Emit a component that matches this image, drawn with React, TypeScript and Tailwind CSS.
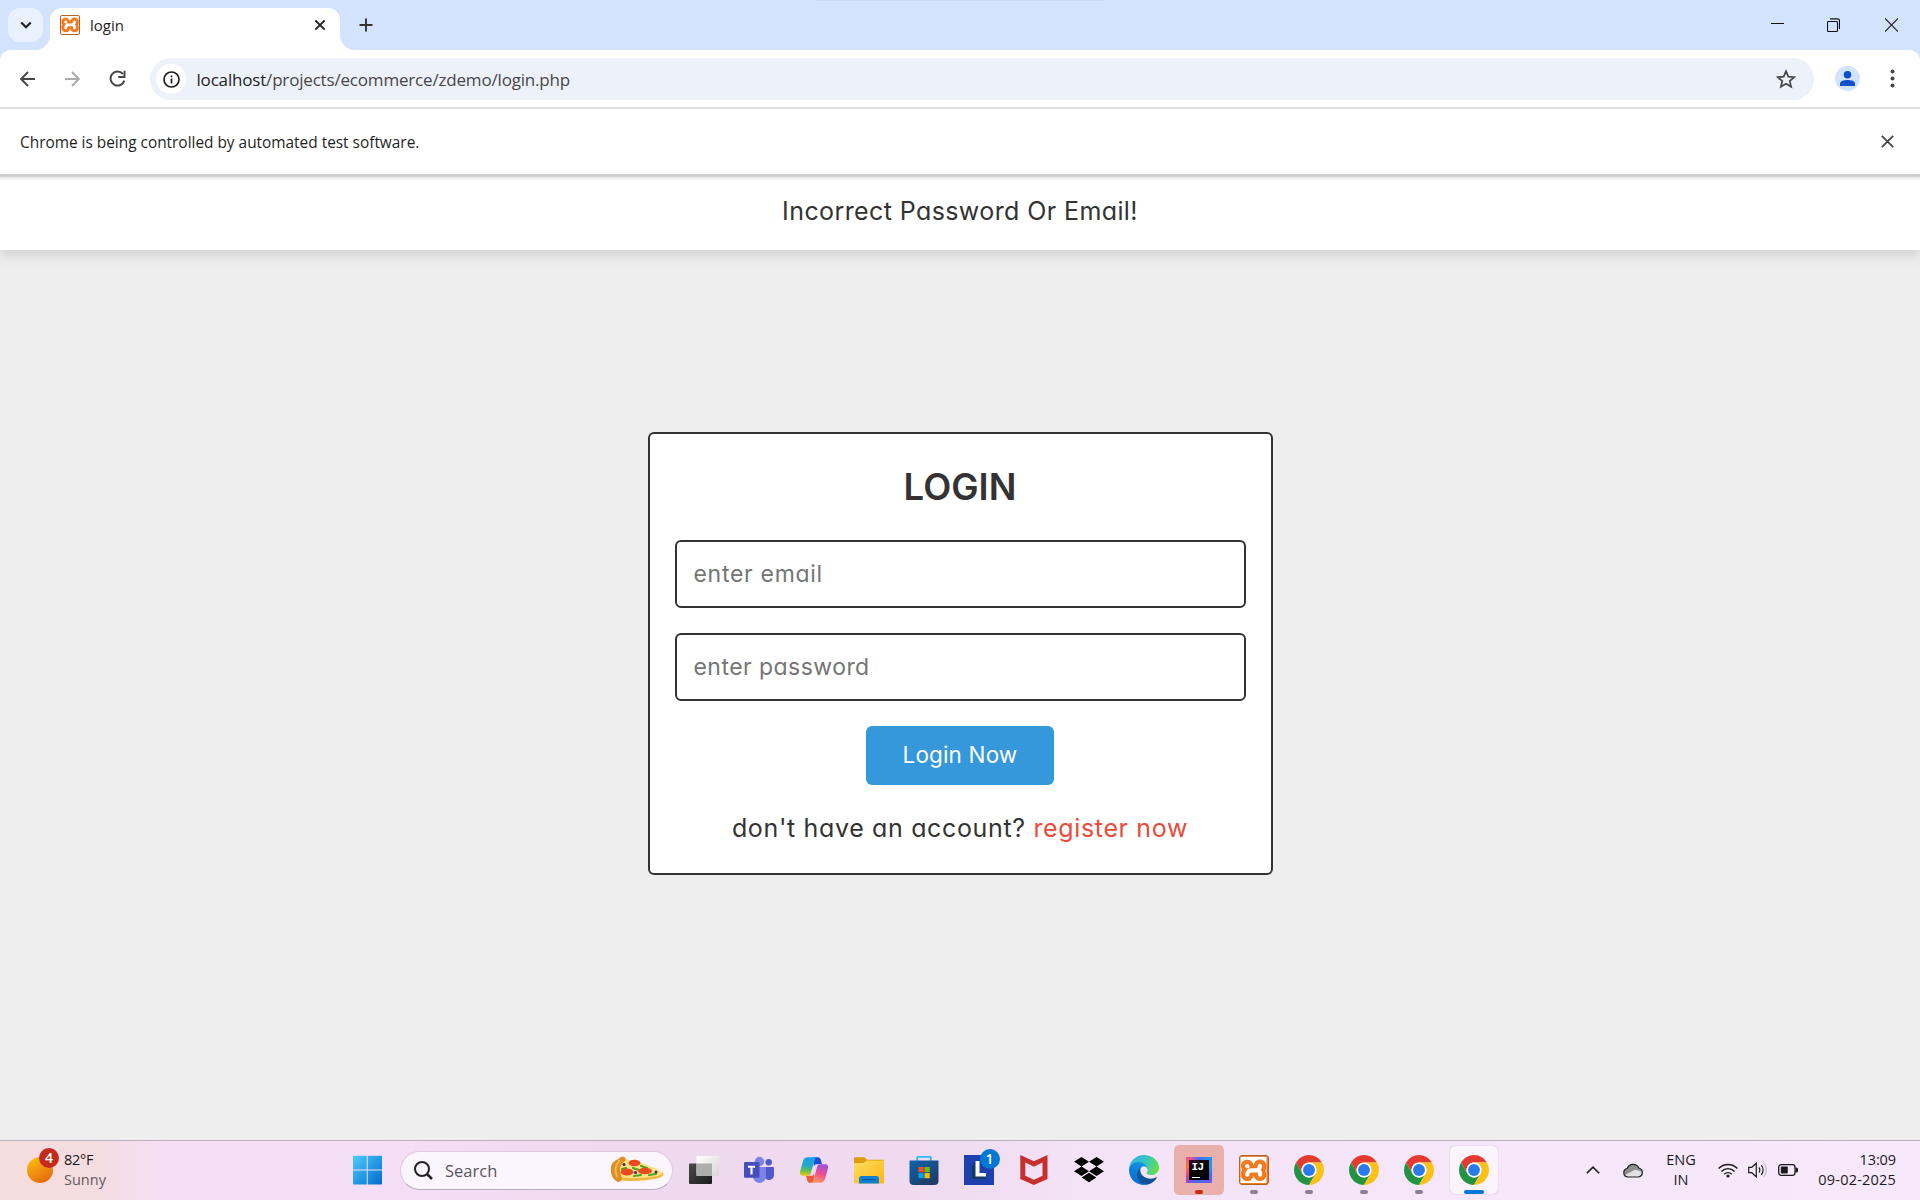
import React from "react";
import { SiXampp } from "react-icons/si";

const UI = "font-['Open_Sans','Noto_Sans',sans-serif]";
const PAGE = "font-['Inter',sans-serif] [font-feature-settings:'cv11']";

function XamppIcon({ small = false }: { small?: boolean }) {
  return (
    <span
      className={`flex shrink-0 items-center justify-center overflow-hidden border border-[#b9621f] bg-[linear-gradient(180deg,#e58a4a_0%,#f27a20_18%,#f4781c_100%)] ${
        small ? "h-5 w-5 rounded-[2px]" : "h-[30px] w-[30px] rounded-[3px]"
      }`}
    >
      <SiXampp size={small ? 24 : 35} className="block shrink-0 text-white [clip-path:inset(13%)]" />
    </span>
  );
}

function ChromeIcon() {
  return (
    <svg width="30" height="30" viewBox="0 0 48 48">
      <path fill="#e33b2e" d="M24 12H44.78A24 24 0 0 0 3.218 12.006L13.609 30.003A12 12 0 0 1 24 12Z" />
      <path fill="#229342" d="M13.609 30.003 3.218 12.006A24 24 0 0 0 24 48L34.393 30.003A12 12 0 0 1 13.609 30.003Z" />
      <path fill="#fbc116" d="M34.391 30.003 24 48A24 24 0 0 0 44.78 12H24A12 12 0 0 1 34.391 30.003Z" />
      <circle cx="24" cy="24" r="12" fill="#fff" />
      <circle cx="24" cy="24" r="9.5" fill="#2a7bea" />
    </svg>
  );
}

function EdgeIcon() {
  return (
    <svg width="30" height="30" viewBox="0 0 256 256">
      <defs>
        <linearGradient id="edgeA" x1="0" y1="0" x2="1" y2="0">
          <stop offset="0" stopColor="#0c59a4" />
          <stop offset="1" stopColor="#114a8b" />
        </linearGradient>
        <linearGradient id="edgeB" x1="0.8" y1="0" x2="0.3" y2="1">
          <stop offset="0" stopColor="#1b9de2" />
          <stop offset="0.5" stopColor="#0c80d8" />
          <stop offset="1" stopColor="#0a6fd0" />
        </linearGradient>
        <linearGradient id="edgeC" x1="0" y1="0.3" x2="1" y2="0.6">
          <stop offset="0" stopColor="#2fb4ea" />
          <stop offset="0.5" stopColor="#36c5c0" />
          <stop offset="1" stopColor="#66de4a" />
        </linearGradient>
      </defs>
      <path fill="url(#edgeA)" d="M231 190.5c-3.4 1.8-6.9 3.4-10.5 4.7a101.5 101.5 0 0 1-35.9 6.5c-47.3 0-88.5-32.5-88.5-74.3 0-11.5 6.4-21.9 16.4-27.3-42.8 1.8-53.8 46.4-53.8 72.5 0 73.9 68.1 81.4 82.8 81.4 7.9 0 19.8-2.3 27-4.6l1.3-.4a128.3 128.3 0 0 0 66.6-52.8 4 4 0 0 0-5.4-5.7Z" />
      <path fill="url(#edgeB)" d="M105.7 241.4a79.2 79.2 0 0 1-22.7-21.3 80.7 80.7 0 0 1 29.5-120c3.2-1.5 8.5-4.1 15.6-4a32.4 32.4 0 0 1 25.7 13 31.9 31.9 0 0 1 6.3 18.7c0-.2 24.5-79.6-80-79.6-43.9 0-80 41.6-80 78.2a130.2 130.2 0 0 0 12.1 56 128 128 0 0 0 156.4 67 75.6 75.6 0 0 1-62.8-8Z" />
      <path fill="url(#edgeC)" d="M152.3 148.9c-.9 1-3.4 2.5-3.4 5.6 0 2.6 1.7 5.1 4.7 7.3 14.5 10 41.7 8.7 41.8 8.7a60.5 60.5 0 0 0 30.5-8.4 61.8 61.8 0 0 0 30.5-53.2c.3-22.4-8-37.3-11.3-43.9C224 23.8 177.7 0 128 0A128 128 0 0 0 0 126.2c.5-36.5 36.8-66 80-66 3.5 0 23.5.3 42 10a72.6 72.6 0 0 1 30.9 29.3c6.1 10.6 7.2 24.1 7.2 29.5s-2.7 13.3-7.8 19.9Z" />
    </svg>
  );
}

function TaskViewIcon() {
  return (
    <svg width="30" height="30" viewBox="0 0 30 30">
      <defs>
        <linearGradient id="tvA" x1="0" y1="0" x2="1" y2="1">
          <stop offset="0" stopColor="#4a4a4a" />
          <stop offset="1" stopColor="#1c1c1c" />
        </linearGradient>
        <linearGradient id="tvB" x1="0" y1="0" x2="1" y2="1">
          <stop offset="0" stopColor="#ffffff" />
          <stop offset="1" stopColor="#d6d6d6" />
        </linearGradient>
      </defs>
      <rect x="0" y="8.5" width="23" height="20.5" rx="1" fill="url(#tvA)" />
      <rect x="7.5" y="1" width="22.5" height="20" rx="1" fill="url(#tvB)" />
      <rect x="7.5" y="8.5" width="15.5" height="12.5" fill="#adadad" />
    </svg>
  );
}

function TeamsIcon() {
  return (
    <svg width="30" height="30" viewBox="0 0 30 30">
      <circle cx="15.5" cy="6.5" r="4.7" fill="#7b83eb" />
      <circle cx="24.7" cy="7.2" r="3.2" fill="#5059c9" />
      <path d="M21 12h8a1 1 0 0 1 1 1v7a5 5 0 0 1-9 3Z" fill="#5059c9" />
      <path d="M9 12h13v9.500a6.500 6.500 0 0 1-13 0Z" fill="#7b83eb" />
      <rect x="0" y="7" width="15.5" height="15.7" rx="1" fill="#464eb8" />
      <path d="M4 10.800h7v2H8.600v6.800H6.400v-6.800H4Z" fill="#fff" />
    </svg>
  );
}

function CopilotIcon() {
  return (
    <svg width="30" height="30" viewBox="0 0 30 30">
      <defs>
        <linearGradient id="cpA" x1="0.4" y1="0" x2="0.3" y2="1">
          <stop offset="0" stopColor="#1c9df0" />
          <stop offset="0.45" stopColor="#20a8c8" />
          <stop offset="0.75" stopColor="#6cc04a" />
          <stop offset="1" stopColor="#f2c811" />
        </linearGradient>
        <linearGradient id="cpB" x1="0.7" y1="0" x2="0.3" y2="1">
          <stop offset="0" stopColor="#9b52e8" />
          <stop offset="0.5" stopColor="#ee4f8c" />
          <stop offset="1" stopColor="#fda063" />
        </linearGradient>
      </defs>
      <path d="M14 2.200h4.800c1.700 0 2.500 1 3 2.600l1.200 4.400h-5.300c-1.500 0-2.300.8-2.700 2.300Z" fill="#1c4fd0" />
      <path d="M16 27.800h-4.800c-1.700 0-2.500-1-3-2.600L7 20.800h5.300c1.500 0 2.300-.8 2.700-2.300Z" fill="#ee5a34" />
      <path d="M8.500 2.200h10c-1.700.3-2.500 1.500-3 3.200l-3.600 12.700c-.5 1.800-1.400 2.700-3.200 2.700H4.200c-2.800 0-3.900-1.500-3-4.700L4 6.200c.8-2.800 2.100-4 4.500-4Z" fill="url(#cpA)" />
      <path d="M21.500 27.800h-10c1.700-.3 2.500-1.500 3-3.200l3.600-12.700c.5-1.800 1.400-2.700 3.200-2.700h4.500c2.800 0 3.900 1.500 3 4.700L26 23.800c-.8 2.800-2.100 4-4.500 4Z" fill="url(#cpB)" />
    </svg>
  );
}

function FolderIcon() {
  return (
    <svg width="30" height="30" viewBox="0 0 30 30">
      <defs>
        <linearGradient id="fdA" x1="0" y1="0" x2="1" y2="1">
          <stop offset="0" stopColor="#ffdc62" />
          <stop offset="1" stopColor="#fcb614" />
        </linearGradient>
      </defs>
      <path d="M0 3.200a1 1 0 0 1 1-1h9.500L13 4.800h16a1 1 0 0 1 1 1V12H0Z" fill="#dd9c0b" />
      <path d="M0 8h9.500L13 5.500h17v22a1 1 0 0 1-1 1H1a1 1 0 0 1-1-1Z" fill="url(#fdA)" />
      <path d="M5 28.500v-5a2.500 2.500 0 0 1 2.500-2.500h15a2.500 2.500 0 0 1 2.500 2.500v5Z" fill="#1180d2" />
      <rect x="8" y="24" width="14" height="1.3" rx=".6" fill="#0a559c" />
    </svg>
  );
}

function StoreIcon() {
  return (
    <svg width="30" height="30" viewBox="0 0 30 30">
      <defs>
        <linearGradient id="stA" x1="0" y1="0" x2="0.7" y2="1">
          <stop offset="0" stopColor="#0f63b0" />
          <stop offset="1" stopColor="#1d3c66" />
        </linearGradient>
      </defs>
      <path d="M8.200 6.500V2.800a1 1 0 0 1 1-1h11.600a1 1 0 0 1 1 1v3.700" fill="none" stroke="#2fb9f2" strokeWidth="1.8" />
      <path d="M.5 5.500h29V26a4 4 0 0 1-4 4h-21a4 4 0 0 1-4-4Z" fill="url(#stA)" />
      <rect x="9.5" y="12" width="5.2" height="5.2" fill="#f25022" />
      <rect x="15.5" y="12" width="5.2" height="5.2" fill="#7fba00" />
      <rect x="9.5" y="18" width="5.2" height="5.2" fill="#00a4ef" />
      <rect x="15.5" y="18" width="5.2" height="5.2" fill="#ffb900" />
    </svg>
  );
}

function LIcon() {
  return (
    <div className="relative h-[30px] w-[30px] bg-[#1f3fae]">
      <svg width="30" height="30" viewBox="0 0 30 30">
        <path d="M8 24V12l4-6v15h10v3Z" fill="#123a5e" />
        <path d="M11.500 6h4v12h6.500v3.500H11.500Z" fill="#fff" />
      </svg>
      <span className={`${UI} absolute -top-1.5 left-4 flex h-5 w-5 items-center justify-center rounded-full bg-[#0078d4] text-[14px] leading-none font-semibold text-white`}>1</span>
    </div>
  );
}

function McAfeeIcon() {
  return (
    <svg width="30" height="30" viewBox="0 0 30 30">
      <path fillRule="evenodd" fill="#c5302f" d="M1.300 0 14.900 6.300 28.500 0V24L14.900 30 1.300 24ZM6.300 7.500V20.800L14.900 24.800 23.500 20.800V7.500L14.900 11.700Z" />
    </svg>
  );
}

function DropboxIcon() {
  return (
    <svg width="30" height="30" viewBox="0 0 30 30">
      <path fill="#000" d="M7.500 2 15 6.700 7.500 11.400 0 6.700ZM22.500 2 30 6.700 22.500 11.400 15 6.700ZM7.500 11.600 15 16.300 7.500 21 0 16.300ZM22.500 11.600 30 16.300 22.500 21 15 16.300ZM15 17.700 22.300 22.400 15 27.200 7.700 22.400Z" />
    </svg>
  );
}

function IntelliJIcon() {
  return (
    <div className="flex h-[26px] w-[26px] items-center justify-center bg-[conic-gradient(from_0deg,#3d6bf0,#2a8df5,#1a9ff5,#3a6ff5,#6f58f0,#3f6cf0,#7a50e0,#f0418c,#f9772c,#e84aa0,#3d6bf0)]">
      <div className="flex h-5 w-5 flex-col justify-between bg-[linear-gradient(135deg,#3a0a2e,#000_50%)] px-[3px] pt-[3px] pb-[2px]">
        <span className="font-['Liberation_Mono',monospace] text-[11px] leading-[9px] font-bold tracking-[-0.5px] text-white">IJ</span>
        <span className="h-px w-2 bg-white" />
      </div>
    </div>
  );
}

function WindowsIcon() {
  return (
    <svg width="30" height="30" viewBox="0 0 30 30">
      <defs>
        <linearGradient id="winA" gradientUnits="userSpaceOnUse" x1="0" y1="0" x2="30" y2="30">
          <stop offset="0" stopColor="#4fd0fb" />
          <stop offset="1" stopColor="#0069cf" />
        </linearGradient>
      </defs>
      <path fill="url(#winA)" d="M1 1.500a.8.800 0 0 1 .8-.8H14.700V14.500H1ZM15.700.7H29.200a.8.800 0 0 1 .8.800V14.500H15.700ZM1 15.500H14.700V29.600H1.800a.8.800 0 0 1-.8-.8ZM15.700 15.500H30V28.800a.8.800 0 0 1-.8.800H15.700Z" />
    </svg>
  );
}

function PizzaIcon() {
  return (
    <svg width="54" height="26" viewBox="0 0 54 26">
      <path d="M9 3C20 3 40 9 53 17c1 2-1 4-4 5C36 25 20 26 8 24Z" fill="#f0b840" />
      <path d="M10 3C22 3 40 9 52 16c1 2-2 3-4 4C36 22 20 23 9 21Z" fill="#fbe283" />
      <path d="M11 1c3-1 6 1 4 4-5 3-6 9-4 14 2 4 0 7-3 7C3 24 0 18 1 11 2 5 6 5 11 1Z" fill="#df8e22" />
      <path d="M10 4C6 8 4 14 7 21" fill="none" stroke="#f7b955" strokeWidth="1.8" />
      <path d="M12 13 16 12M23 12l6 2M31 10l6 2M24 20l7-1M39 19l7-1" stroke="#4fa327" strokeWidth="2.2" strokeLinecap="round" />
      <ellipse cx="24.5" cy="7" rx="6" ry="3.2" fill="#ea4a20" />
      <ellipse cx="17" cy="16" rx="6.5" ry="3.5" fill="#ea4a20" />
      <ellipse cx="35" cy="15" rx="7" ry="3.2" fill="#ea4a20" />
      <g fill="#4b2c59">
        <circle cx="14" cy="8.5" r="1.6" />
        <circle cx="25.5" cy="16.5" r="1.6" />
        <circle cx="46" cy="16" r="1.5" />
      </g>
    </svg>
  );
}

function TaskItem({ children, mark }: { children: React.ReactNode; mark?: "idle" | "red" | "active" }) {
  const tile =
    mark === "red" ? "bg-[#e9b0ab]" : mark === "active" ? "bg-[#fbf4fd] shadow-[0_0_1px_rgba(120,80,120,0.5)]" : "";
  const size = mark === "active" ? "h-12 w-12" : "h-[50px] w-[50px]";
  const line =
    mark === "idle" ? "w-2 bg-[#8b808f]" : mark === "red" ? "w-2 bg-[#c42b1c]" : mark === "active" ? "w-5 bg-[#0078d4]" : "hidden";
  return (
    <div className="flex w-[55px] items-center justify-center">
      <div className={`relative flex items-center justify-center rounded-[5px] ${size} ${tile}`}>
        {children}
        <span className={`absolute ${mark === "active" ? "bottom-0" : "bottom-px"} left-1/2 h-1 -translate-x-1/2 rounded-full ${line}`} />
      </div>
    </div>
  );
}

function TabStrip() {
  return (
    <div className="relative flex h-[50px] bg-[#d3e3fd] pt-2 pl-2">
      <div className="absolute top-0 left-[815px] h-px w-[290px] bg-[#c9daf5]" />
      <button className="flex h-[34px] w-[35px] items-center justify-center rounded-xl bg-[#e9f1fe]">
        <svg width="12" height="12" viewBox="0 0 12 12" fill="none" stroke="#1f1f1f" strokeWidth="2.2">
          <path d="M1.300 3.500 6 8.200l4.700-4.700" />
        </svg>
      </button>
      <div className="relative ml-[7px] flex h-[42px] w-[290px] items-center rounded-t-xl bg-white pr-3 pb-2 pl-[10px]">
        <div className="absolute bottom-0 -left-[15px] h-[15px] w-[15px] bg-[radial-gradient(circle_at_0_0,transparent_14.5px,white_15.5px)]" />
        <div className="absolute -right-[15px] bottom-0 h-[15px] w-[15px] bg-[radial-gradient(circle_at_100%_0,transparent_14.5px,white_15.5px)]" />
        <XamppIcon small />
        <span className={`${UI} ml-[10px] text-[15px] leading-5 text-[#1f1f1f]`}>login</span>
        <svg className="mr-[2px] ml-auto" width="12" height="12" viewBox="0 0 12 12" fill="none" stroke="#1f1f1f" strokeWidth="1.9">
          <path d="m1.300 1.300 9.400 9.400M10.700 1.300l-9.400 9.400" />
        </svg>
      </div>
      <svg className="mt-[10px] ml-[19px]" width="14" height="14" viewBox="0 0 14 14" stroke="#333" strokeWidth="1.9">
        <path d="M7 .5v13M.5 7h13" />
      </svg>
      <div className="ml-auto flex h-[34px] items-center">
        <svg className="mr-[43px]" width="13" height="14" viewBox="0 0 13 14">
          <path d="M0 5.500h13" stroke="#111" />
        </svg>
        <svg className="mr-[45px]" width="13" height="14" viewBox="0 0 13 14" fill="none" stroke="#111" strokeWidth="1.1">
          <rect x=".5" y="3.5" width="10" height="10" rx="1" />
          <path d="M3 .9h7.500a2 2 0 0 1 2 2V11" />
        </svg>
        <svg className="mr-[22px]" width="13" height="14" viewBox="0 0 13 14" stroke="#222" strokeWidth="1.2">
          <path d="m0 .5 13 13M13 .5l-13 13" />
        </svg>
      </div>
    </div>
  );
}

function Toolbar() {
  return (
    <div className="bg-[#d3e3fd]">
      <div className="flex h-[59px] items-center rounded-t-[10px] border-b-2 border-[#e0e0e0] bg-white pl-5">
        <svg width="15" height="16" viewBox="0 0 15 16" fill="none" stroke="#444746" strokeWidth="1.9">
          <path d="M15 8H1.500M8 1 1.200 8 8 15" />
        </svg>
        <svg className="ml-[30px]" width="15" height="16" viewBox="0 0 15 16" fill="none" stroke="#ababab" strokeWidth="1.9">
          <path d="M0 8h13.500M7 1l6.800 7L7 15" />
        </svg>
        <svg className="ml-[29px]" width="17" height="17" viewBox="0 0 17 17" fill="none" stroke="#444746" strokeWidth="2">
          <path d="M15.300 10.600A7 7 0 1 1 13.900 4" />
          <path d="M15.500.8V7H9.300" />
        </svg>
        <div className="mt-px ml-[24px] flex h-[42px] w-[1664px] items-center rounded-full bg-[#edf1fa] pl-[6px]">
          <div className="flex h-[30px] w-[30px] items-center justify-center rounded-full bg-white">
            <svg width="17" height="17" viewBox="0 0 17 17" fill="none" stroke="#1f1f1f" strokeWidth="1.7">
              <circle cx="8.5" cy="8.5" r="7.5" />
              <path d="M8.500 7.500V12.500M8.500 4.500V6.200" />
            </svg>
          </div>
          <span className={`${UI} ml-[10.5px] pt-[2px] text-[17px] leading-6 tracking-[-0.18px] text-[#474747]`}>
            <span className="text-[#1f1f1f]">localhost</span>/projects/ecommerce/zdemo/login.php
          </span>
          <svg className="mr-[18px] ml-auto" width="20" height="20" viewBox="0 0 20 20" fill="none" stroke="#444746" strokeWidth="1.7">
            <path d="M10 2.200l2.300 5.400 5.900.5-4.500 3.900 1.400 5.700L10 14.700l-5.100 3 1.400-5.700L1.800 8.100l5.900-.5Z" />
          </svg>
        </div>
        <div className="ml-[21px] flex h-[25px] w-[25px] items-center justify-center overflow-hidden rounded-full bg-[#d3e3fd]">
          <svg width="15" height="15" viewBox="0 0 15 15" fill="#0b50c8">
            <circle cx="7.5" cy="3.8" r="3.8" />
            <path d="M0 15v-2.200C0 10 4 9 7.500 9S15 10 15 12.800V15Z" />
          </svg>
        </div>
        <svg className="ml-[30px]" width="5" height="19" viewBox="0 0 5 19" fill="#444746">
          <circle cx="2.5" cy="2.5" r="2" />
          <circle cx="2.5" cy="9.5" r="2" />
          <circle cx="2.5" cy="16.5" r="2" />
        </svg>
      </div>
    </div>
  );
}

function Taskbar() {
  return (
    <footer className={`${UI} flex h-[60px] items-center border-t border-[#bdadc0] bg-[linear-gradient(90deg,#f6dcdd_0px,#f5dcdf_90px,#f5dff7_170px,#f5dff7_380px,#eed9ee_620px,#efdaf0_900px,#f4e2f6_1080px,#f6e6fa_1400px,#f7e8fb_1920px)] pb-px`}>
      <div className="relative ml-[27px] h-[26px] w-[26px] rounded-full bg-[linear-gradient(150deg,#fdc70c,#f08a10_55%,#e25d05)]">
        <span className="absolute -top-[9px] left-3 flex h-5 w-5 items-center justify-center rounded-full bg-[#c42b1c] text-[14px] leading-none font-semibold text-white">4</span>
      </div>
      <div className="ml-[11px] w-[61px] pb-px text-[14.5px] leading-5">
        <div className="tracking-[-0.3px] text-[#1b1b1b]">82°F</div>
        <div className="text-[#5f5a60]">Sunny</div>
      </div>
      <div className="ml-[227px] h-[30px] w-[30px]"><WindowsIcon /></div>
      <div className="ml-[18px] flex h-[39px] w-[273px] items-center rounded-full border border-[#dccbe0] border-b-[#bba9c0] bg-[#fbf5fd] pr-2 pl-[13px]">
        <svg width="19" height="19" viewBox="0 0 19 19" fill="none" stroke="#222" strokeWidth="2">
          <circle cx="8" cy="8" r="7" />
          <path d="m13 13 5 5" strokeWidth="2.5" />
        </svg>
        <span className="ml-3 pt-[2px] text-[16.5px] text-[#5a555c]">Search</span>
        <div className="mb-[2px] ml-auto"><PizzaIcon /></div>
      </div>
      <div className="ml-[3px] flex items-center">
        <TaskItem><TaskViewIcon /></TaskItem>
        <TaskItem><TeamsIcon /></TaskItem>
        <TaskItem><CopilotIcon /></TaskItem>
        <TaskItem><FolderIcon /></TaskItem>
        <TaskItem><StoreIcon /></TaskItem>
        <TaskItem><LIcon /></TaskItem>
        <TaskItem><McAfeeIcon /></TaskItem>
        <TaskItem><DropboxIcon /></TaskItem>
        <TaskItem><EdgeIcon /></TaskItem>
        <TaskItem mark="red"><IntelliJIcon /></TaskItem>
        <TaskItem mark="idle"><XamppIcon /></TaskItem>
        <TaskItem mark="idle"><ChromeIcon /></TaskItem>
        <TaskItem mark="idle"><ChromeIcon /></TaskItem>
        <TaskItem mark="idle"><ChromeIcon /></TaskItem>
        <TaskItem mark="active"><ChromeIcon /></TaskItem>
      </div>
      <div className="mr-6 ml-auto flex items-center text-[14.5px] leading-5 text-[#1b1b1b]">
        <svg width="14" height="8" viewBox="0 0 14 8" fill="none" stroke="#1b1b1b" strokeWidth="1.6">
          <path d="M.8 7.300 7 1.200l6.200 6.100" />
        </svg>
        <svg className="ml-[23px]" width="20" height="15" viewBox="0 0 20 15">
          <path d="M5 14a4.300 4.300 0 0 1-.8-8.500A6.300 6.300 0 0 1 15.800 5 4.600 4.600 0 0 1 15.500 14Z" fill="#8e8e8e" />
          <path d="M2 12 12 6.800c4 .4 6.500 1.500 7 3.400-.4 2.500-1.800 3.800-3.500 3.800H5c-1.200 0-2.500-1-3-2Z" fill="#e3e0e3" />
          <path d="M5 14a4.300 4.300 0 0 1-.8-8.500A6.300 6.300 0 0 1 15.800 5 4.600 4.600 0 0 1 15.500 14Z" fill="none" stroke="#222" strokeWidth="1.2" />
        </svg>
        <div className="ml-[23px] w-[30px] text-center">
          <div>ENG</div>
          <div>IN</div>
        </div>
        <svg className="ml-[22px]" width="20" height="15" viewBox="0 0 20 15" fill="none" stroke="#1b1b1b" strokeWidth="1.4">
          <path d="M.6 5.500a13 13 0 0 1 18.800 0M3.400 8.400a9.300 9.300 0 0 1 13.200 0M6.200 11.200a5.400 5.400 0 0 1 7.600 0" />
          <circle cx="10" cy="13" r="1.6" fill="#1b1b1b" stroke="none" />
        </svg>
        <svg className="ml-[10px]" width="20" height="16" viewBox="0 0 20 16" fill="none" stroke="#1b1b1b" strokeWidth="1.2">
          <path d="M.7 5.300h3L8.300 1.200v13.600L3.700 10.700h-3Z" />
          <path d="M10.800 5.500a3.500 3.500 0 0 1 0 5M13.200 3.200a7 7 0 0 1 0 9.600" />
          <path d="M15.600 1a10.500 10.500 0 0 1 0 14" stroke="#c5b9c8" />
        </svg>
        <svg className="ml-[10px]" width="20" height="12" viewBox="0 0 20 12">
          <rect x=".7" y=".7" width="16.3" height="10.6" rx="2.5" fill="none" stroke="#1b1b1b" strokeWidth="1.3" />
          <rect x="2.8" y="2.6" width="7" height="6.8" rx=".8" fill="#1b1b1b" />
          <path d="M17.500 3.500h1a1.500 1.500 0 0 1 1.500 1.500v2a1.500 1.500 0 0 1-1.500 1.500h-1Z" fill="#1b1b1b" />
        </svg>
        <div className="ml-[15px] w-[83px] pb-px text-right whitespace-nowrap">
          <div className="tracking-[-0.1px]">13:09</div>
          <div className="tracking-[0.2px]">09-02-2025</div>
        </div>
      </div>
    </footer>
  );
}

export default function App() {
  return (
    <div className="flex h-[1200px] w-[1920px] flex-col overflow-hidden bg-[#eeeeee]">
      <TabStrip />
      <Toolbar />
      <div className="flex h-[65px] items-center justify-between bg-white pr-[26px] pl-5">
        <span className={`${UI} pt-[2px] text-[15.4px] leading-5 text-[#1f1f1f]`}>Chrome is being controlled by automated test software.</span>
        <svg width="13" height="13" viewBox="0 0 13 13" fill="none" stroke="#444746" strokeWidth="1.8">
          <path d="m.8.8 11.400 11.400M12.200.8.8 12.200" />
        </svg>
      </div>
      <main className={`${PAGE} flex flex-1 flex-col items-center text-[#333]`}>
        <div className="relative flex h-[76px] w-full items-center justify-center bg-white pb-[2px] shadow-[0_6px_12px_rgba(0,0,0,0.11)]">
          <div className="absolute inset-x-0 top-0 h-[7px] bg-[linear-gradient(180deg,#cfcfcf_0,#cfcfcf_2px,#e8eae9_3.5px,#fff_7px)]" />
          <span className="text-[25px] leading-8 tracking-[0.4px]">Incorrect Password Or Email!</span>
        </div>
        <form className="mt-[182px] flex h-[443px] w-[625px] flex-col items-center rounded-md border-2 border-[#333] bg-white px-[25px] pt-7">
          <h3 className="text-[36.5px] leading-[50px] font-semibold">LOGIN</h3>
          <div className="mt-7 flex h-[68px] w-full items-center rounded-md border-2 border-[#333] px-[17px] text-[23px] tracking-[0.7px] text-[#757575]">enter email</div>
          <div className="mt-[25px] flex h-[68px] w-full items-center rounded-md border-2 border-[#333] px-[17px] text-[23px] tracking-[0.45px] text-[#757575]">enter password</div>
          <button className="mt-[25px] h-[59px] w-[188px] rounded-md bg-[#3498db] pb-[2px] text-[22.5px] tracking-[0.15px] text-white">Login Now</button>
          <p className="mt-[27px] text-[25px] leading-8 tracking-[0.65px] whitespace-nowrap">
            don't have an account? <span className="text-[#e74c3c]">register now</span>
          </p>
        </form>
      </main>
      <Taskbar />
    </div>
  );
}
